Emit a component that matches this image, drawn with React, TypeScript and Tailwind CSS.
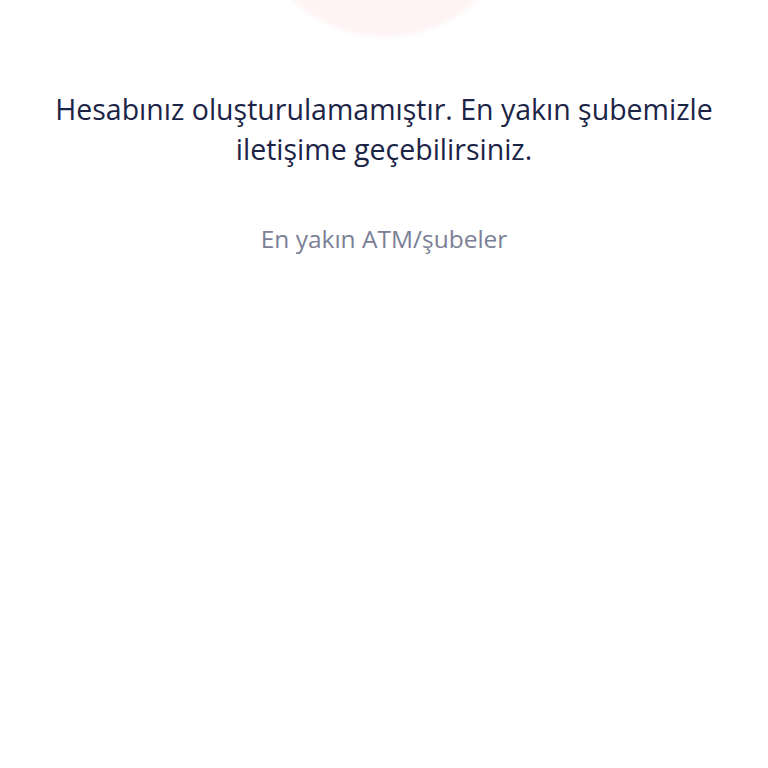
export default function App() {
  return (
    <div
      className="w-[768px] h-[768px] bg-white overflow-hidden flex flex-col items-center"
      style={{ fontFamily: '"Open Sans", "Noto Sans", sans-serif' }}
    >
      {/* soft pink illustration circle cut off at top */}
      <div className="mt-[-233px] ml-[2px] w-[270px] h-[270px] rounded-full bg-[#fef4f5] blur-[2px] flex items-center justify-center shrink-0">
        <div className="mt-[-30px] w-[210px] h-[210px] rounded-full bg-[#fadbe0] blur-[6px]" />
      </div>

      <h1 className="mt-[52px] px-6 text-center text-[28.5px] leading-[40px] font-medium text-[#1b2446]">
        Hesabınız oluşturulamamıştır. En yakın şubemizle iletişime geçebilirsiniz.
      </h1>

      <p className="mt-[55px] text-[24.5px] leading-[30px] text-[#7b8096]">En yakın ATM/şubeler</p>
    </div>
  );
}
